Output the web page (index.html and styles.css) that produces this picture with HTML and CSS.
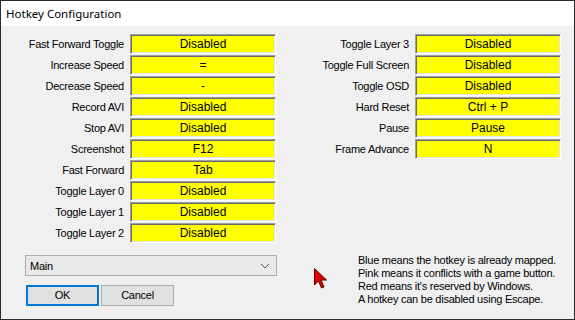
FILE: index.html
```html
<!DOCTYPE html>
<html>
<head>
<meta charset="utf-8">
<link rel="stylesheet" href="styles.css">
</head>
<body>
<div class="window">
  <div class="titlebar">Hotkey Configuration</div>
  <div class="content">
    <div class="columns">
      <div class="grid grid-left">
        <div class="label">Fast Forward Toggle</div><div class="key">Disabled</div>
        <div class="label">Increase Speed</div><div class="key">=</div>
        <div class="label">Decrease Speed</div><div class="key">-</div>
        <div class="label">Record AVI</div><div class="key">Disabled</div>
        <div class="label">Stop AVI</div><div class="key">Disabled</div>
        <div class="label">Screenshot</div><div class="key">F12</div>
        <div class="label">Fast Forward</div><div class="key">Tab</div>
        <div class="label">Toggle Layer 0</div><div class="key">Disabled</div>
        <div class="label">Toggle Layer 1</div><div class="key">Disabled</div>
        <div class="label">Toggle Layer 2</div><div class="key">Disabled</div>
      </div>
      <div class="grid grid-right">
        <div class="label">Toggle Layer 3</div><div class="key">Disabled</div>
        <div class="label">Toggle Full Screen</div><div class="key">Disabled</div>
        <div class="label">Toggle OSD</div><div class="key">Disabled</div>
        <div class="label">Hard Reset</div><div class="key">Ctrl + P</div>
        <div class="label">Pause</div><div class="key">Pause</div>
        <div class="label">Frame Advance</div><div class="key">N</div>
      </div>
    </div>
    <div class="bottom">
      <div class="controls">
        <div class="combo">
          <span>Main</span>
          <svg class="chev" width="10" height="6" viewBox="0 0 10 6"><path d="M1 1 L5 5 L9 1" fill="none" stroke="#555" stroke-width="1"/></svg>
        </div>
        <div class="buttons">
          <div class="btn btn-default">OK</div>
          <div class="btn">Cancel</div>
        </div>
      </div>
      <div class="help">
        <div>Blue means the hotkey is already mapped.</div>
        <div>Pink means it conflicts with a game button.</div>
        <div>Red means it's reserved by Windows.</div>
        <div>A hotkey can be disabled using Escape.</div>
      </div>
    </div>
  </div>
  <svg class="cursor" width="14" height="22" viewBox="0 0 14 22">
    <path d="M0.5 0.5 L0.5 17 L4.5 13 L7.5 20 L10 19 L7 12 L12.5 12 Z" fill="#e00000" stroke="#600000" stroke-width="1"/>
  </svg>
</div>
</body>
</html>
```

FILE: styles.css
```css
html, body {
  margin: 0;
  padding: 0;
}
body {
  width: 575px;
  height: 320px;
  overflow: hidden;
  font-family: "Liberation Sans", Arial, sans-serif;
  color: #000;
}
.window {
  position: relative;
  box-sizing: border-box;
  width: 575px;
  height: 320px;
  border: 1px solid #2b2b2b;
  background: #f0f0f0;
  display: flex;
  flex-direction: column;
}
.titlebar {
  height: 25px;
  background: #fff;
  font-family: "Noto Sans", "Open Sans", sans-serif;
  font-size: 11.5px;
  line-height: 25px;
  padding-left: 5px;
  flex: none;
}
.content {
  padding-top: 8px;
  flex: 1;
}
.columns {
  display: flex;
  gap: 6px;
}
.grid {
  display: grid;
  grid-auto-rows: 20px;
  row-gap: 1px;
  column-gap: 6px;
}
.grid-left {
  grid-template-columns: 123px 146px;
}
.grid-right {
  grid-template-columns: 127px 146px;
  align-content: start;
}
.label {
  font-size: 11px;
  letter-spacing: -0.25px;
  text-align: right;
  line-height: 20px;
  white-space: nowrap;
}
.key {
  box-sizing: border-box;
  background: #ffff00;
  border-style: solid;
  border-width: 1px;
  border-color: #a0a0a0 #ffffff #ffffff #a0a0a0;
  box-shadow: inset 1px 1px 0 #696969, inset -1px -1px 0 #e3e3e3;
  font-size: 12px;
  line-height: 18px;
  text-align: center;
  white-space: nowrap;
}
.bottom {
  display: flex;
  margin-top: 12px;
}
.controls {
  margin-left: 24px;
  width: 252px;
  display: flex;
  flex-direction: column;
  gap: 9px;
}
.combo {
  box-sizing: border-box;
  height: 21px;
  border: 1px solid #adadad;
  background: #e9e9e9;
  display: flex;
  align-items: center;
  justify-content: space-between;
  padding: 0 6px 0 4px;
  font-size: 11px;
  letter-spacing: -0.25px;
}
.chev {
  display: block;
}
.buttons {
  display: flex;
  gap: 2px;
  padding-left: 1px;
}
.btn {
  box-sizing: border-box;
  width: 73px;
  height: 21px;
  border: 1px solid #adadad;
  background: #e1e1e1;
  font-size: 11px;
  letter-spacing: -0.25px;
  line-height: 19px;
  text-align: center;
}
.btn-default {
  border: 2px solid #0078d7;
  line-height: 17px;
}
.help {
  margin-left: 81px;
  margin-top: -1px;
  font-size: 11px;
  letter-spacing: -0.25px;
  line-height: 13px;
  white-space: nowrap;
}
.cursor {
  position: absolute;
  left: 313px;
  top: 267px;
}
```
